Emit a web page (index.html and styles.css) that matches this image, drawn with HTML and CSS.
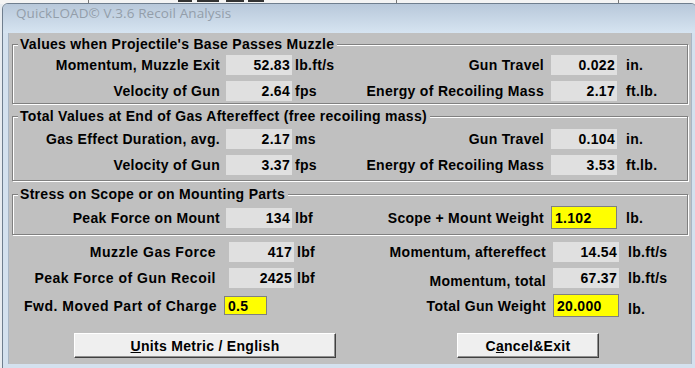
FILE: index.html
```html
<!DOCTYPE html>
<html>
<head>
<meta charset="utf-8">
<link rel="stylesheet" href="styles.css">
</head>
<body>
<div class="behind">
  <span class="mark m1"></span><span class="mark m2"></span><span class="mark m3"></span>
  <span class="mark m4"></span><span class="vline v1"></span><span class="vline v2"></span><span class="vline v3"></span>
</div>
<div class="window">
  <div class="titlebar">QuickLOAD© V.3.6 Recoil Analysis</div>
  <div class="client">
    <fieldset class="group g1">
      <legend>Values when Projectile's Base Passes Muzzle</legend>
      <div class="row">
        <span class="lbl">Momentum, Muzzle Exit</span><span class="val">52.83</span><span class="unit">lb.ft/s</span>
        <span class="lbl lbl2">Gun Travel</span><span class="val">0.022</span><span class="unit unit2">in.</span>
      </div>
      <div class="row">
        <span class="lbl">Velocity of Gun</span><span class="val">2.64</span><span class="unit">fps</span>
        <span class="lbl lbl2">Energy of Recoiling Mass</span><span class="val">2.17</span><span class="unit unit2">ft.lb.</span>
      </div>
    </fieldset>
    <fieldset class="group g2">
      <legend>Total Values at End of Gas Aftereffect (free recoiling mass)</legend>
      <div class="row">
        <span class="lbl">Gas Effect Duration, avg.</span><span class="val">2.17</span><span class="unit">ms</span>
        <span class="lbl lbl2">Gun Travel</span><span class="val">0.104</span><span class="unit unit2">in.</span>
      </div>
      <div class="row">
        <span class="lbl">Velocity of Gun</span><span class="val">3.37</span><span class="unit">fps</span>
        <span class="lbl lbl2">Energy of Recoiling Mass</span><span class="val">3.53</span><span class="unit unit2">ft.lb.</span>
      </div>
    </fieldset>
    <fieldset class="group g3">
      <legend>Stress on Scope or on Mounting Parts</legend>
      <div class="row">
        <span class="lbl">Peak Force on Mount</span><span class="val">134</span><span class="unit">lbf</span>
        <span class="lbl lbl2">Scope + Mount Weight</span><span class="input">1.102</span><span class="unit unit2">lb.</span>
      </div>
    </fieldset>
    <div class="free">
      <div class="row">
        <span class="lbl lbl-free">Muzzle Gas Force</span><span class="val val-free">417</span><span class="unit">lbf</span>
        <span class="lbl lbl2">Momentum, aftereffect</span><span class="val">14.54</span><span class="unit unit2">lb.ft/s</span>
      </div>
      <div class="row">
        <span class="lbl lbl-free">Peak Force of Gun Recoil</span><span class="val val-free">2425</span><span class="unit">lbf</span>
        <span class="lbl lbl2 low">Momentum, total</span><span class="val">67.37</span><span class="unit unit2">lb.ft/s</span>
      </div>
      <div class="row row-input">
        <span class="lbl lbl-short">Fwd. Moved Part of Charge</span><span class="input input-short">0.5</span><span class="unit"></span>
        <span class="lbl lbl2">Total Gun Weight</span><span class="input">20.000</span><span class="unit unit2 low">lb.</span>
      </div>
    </div>
    <div class="buttons">
      <button class="btn btn-units"><u>U</u>nits Metric / English</button>
      <button class="btn btn-cancel">C<u>a</u>ncel&amp;Exit</button>
    </div>
  </div>
</div>
</body>
</html>
```
FILE: styles.css
```css
html, body {
  margin: 0;
  padding: 0;
}
body {
  width: 695px;
  height: 368px;
  overflow: hidden;
  background: #e8ecf0;
  font-family: "Liberation Sans", Arial, sans-serif;
  position: relative;
}
.behind {
  position: absolute;
  left: 0;
  top: 0;
  width: 695px;
  height: 4px;
  background: #f4f4f4;
}
.mark {
  position: absolute;
  top: 0;
  height: 2px;
  background: #333;
}
.m1 { left: 178px; width: 14px; }
.m2 { left: 197px; width: 22px; }
.m3 { left: 226px; width: 18px; }
.m4 { left: 248px; width: 16px; }
.vline {
  position: absolute;
  top: 0;
  width: 1px;
  height: 4px;
  background: #777;
}
.v1 { left: 88px; }
.v2 { left: 396px; }
.v3 { left: 618px; }
.window {
  position: absolute;
  left: 2px;
  top: 3px;
  width: 684px;
  height: 366px;
  border: 1px solid #6f7e8e;
  border-radius: 6px 6px 0 0;
  background: #d4e1ee;
  padding: 0 4px 0 5px;
  box-sizing: content-box;
}
.titlebar {
  height: 29px;
  line-height: 30px;
  background: linear-gradient(#b8c8da, #d6e4f1);
  margin: 0 -4px 0 -5px;
  padding-left: 13px;
  border-radius: 5px 5px 0 0;
  font: 13.5px "Open Sans", "Noto Sans", sans-serif;
  color: #939eaa;
  letter-spacing: 0.1px;
}
.client {
  background: #c0c0c0;
  height: 331px;
  padding-top: 3px;
  box-sizing: border-box;
  border-left: 1px solid #a9b6c4;
  border-right: 1px solid #a9b6c4;
}
.group {
  margin: 0 3px;
  padding: 3px 0 2px 0;
  border: 1px solid #808080;
  box-shadow: inset 1px 1px 0 #fff, 1px 1px 0 #fff;
  min-width: 0;
}
.group legend {
  margin-left: 5px;
  padding: 0 3px 0 2px;
  background: #c0c0c0;
  font: bold 14px "Liberation Sans", Arial, sans-serif;
  letter-spacing: 0.3px;
  line-height: 16px;
  color: #000;
}
.g2 { margin-top: 4px; padding-top: 5px; padding-bottom: 5px; }
.g3 { margin-top: 5px; padding-top: 4px; padding-bottom: 8px; }
.row {
  display: grid;
  grid-template-columns: 213px 66px 63px 196px 66px 1fr;
  align-items: center;
  height: 20px;
  margin-bottom: 6px;
  font: bold 14px "Liberation Sans", Arial, sans-serif;
  letter-spacing: 0.3px;
  color: #000;
}
.group .row:last-child { margin-bottom: 0; }
.lbl {
  text-align: right;
  padding-right: 6px;
  white-space: nowrap;
}
.lbl2 { padding-right: 7px; }
.lbl-free { padding-right: 12px; letter-spacing: 0.5px; }
.val {
  background: #e0e0e0;
  height: 20px;
  line-height: 20px;
  text-align: right;
  padding-right: 2px;
  box-sizing: border-box;
}
.val-free { margin-left: 1px; }
.unit { padding-left: 3px; white-space: nowrap; }
.unit2 { padding-left: 9px; }
.input {
  background: #ffff00;
  border: 1px solid #808080;
  height: 23px;
  line-height: 22px;
  padding-left: 3px;
  box-sizing: border-box;
}
.low { position: relative; top: 3px; }
.free {
  padding-left: 6px;
  margin-top: 7px;
}
.row-input { height: 22px; }
.lbl-short { padding-right: 11px; letter-spacing: 0.5px; }
.input-short {
  width: 43px;
  margin-left: -4px;
  height: 19px;
  line-height: 18px;
}
.buttons {
  display: flex;
  margin-top: 17px;
  padding-left: 65px;
  gap: 121px;
}
.btn {
  height: 25px;
  padding: 0;
  background: #efefef;
  border: 1px solid;
  border-color: #ffffff #404040 #404040 #ffffff;
  box-shadow: inset -1px -1px 0 #909090;
  font: bold 14px "Liberation Sans", Arial, sans-serif;
  letter-spacing: 0.3px;
  color: #000;
}
.btn-units { width: 262px; }
.btn-cancel { width: 142px; }
```
